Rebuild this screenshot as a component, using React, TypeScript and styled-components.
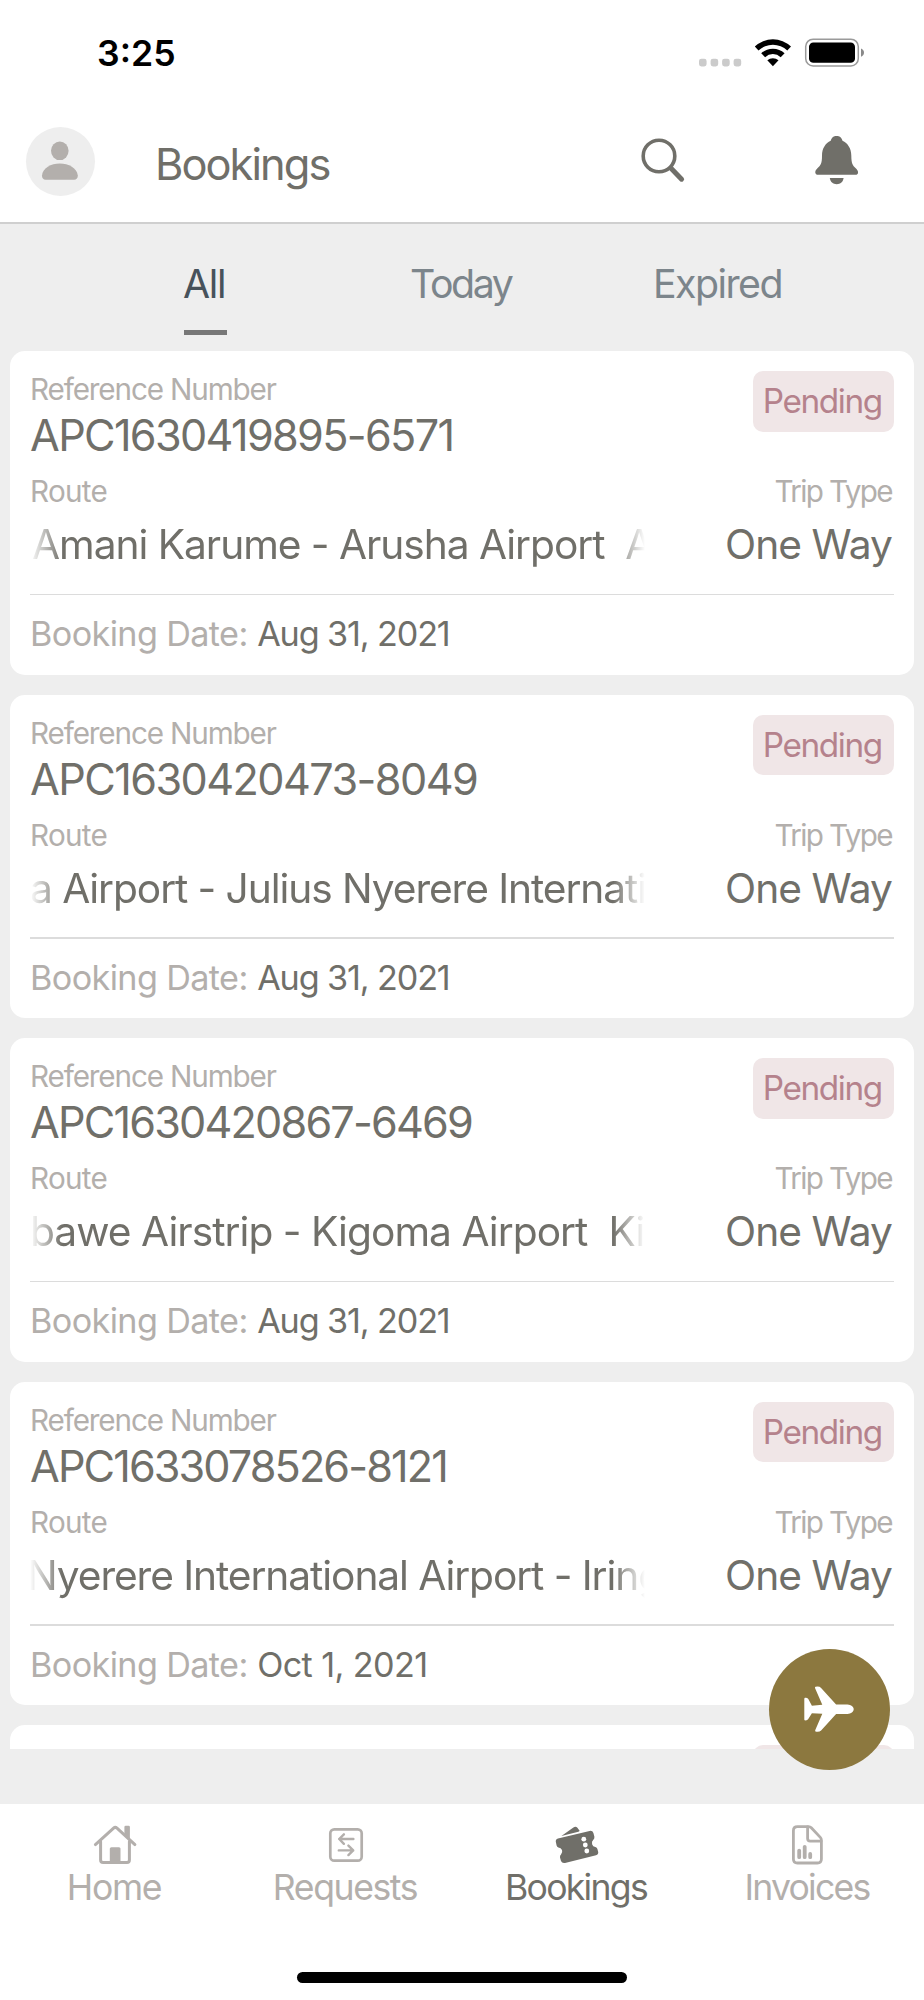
import React from 'react';
import styled, { createGlobalStyle } from 'styled-components';

const color = {
  ink: '#706f69',
  muted: '#b3afac',
  surface: '#eeeeee',
  white: '#ffffff',
  line: '#dcdcdc',
  gold: '#8c783f',
  badge: '#f0e6e7',
  badgeText: '#b5828c',
};

const GlobalStyle = createGlobalStyle`
  * { box-sizing: border-box; }
  body {
    margin: 0;
    background: ${color.white};
    font-family: Inter, "Liberation Sans", sans-serif;
    color: ${color.ink};
  }
`;

const Screen = styled.div`
  position: relative;
  display: flex;
  flex-direction: column;
  width: 924px;
  height: 2000px;
  overflow: hidden;
  background: ${color.white};
`;

const StatusBar = styled.div`
  display: flex;
  justify-content: space-between;
  align-items: center;
  height: 106px;
  padding: 0 59px 0 97px;
`;

const Clock = styled.span`
  padding-top: 2px;
  font-size: 35.6px;
  font-weight: 600;
  line-height: 44px;
  color: #000;
`;

const Header = styled.header`
  display: flex;
  align-items: center;
  height: 118px;
  padding: 0 62px 0 26px;
  border-bottom: 2px solid #cfcfcf;
`;

const Avatar = styled.div`
  width: 69px;
  height: 69px;
  margin-bottom: 5px;
  border-radius: 50%;
  background: ${color.surface};
`;

const Title = styled.h1`
  flex: 1;
  margin: 0 0 0 60px;
  font-size: 43.4px;
  font-weight: 400;
  line-height: 52px;
  letter-spacing: -1.94px;
`;

const HeaderActions = styled.div`
  display: flex;
  gap: 124px;
  margin-bottom: 6px;
`;

const Tabs = styled.div`
  display: grid;
  grid-template-columns: repeat(3, 1fr);
  height: 127px;
  padding: 29.5px 77px 0;
  background: ${color.surface};
`;

const Tab = styled.div<{ $active?: boolean; $track: number }>`
  display: flex;
  flex-direction: column;
  align-items: center;
  gap: 16.5px;
  font-size: 39.3px;
  line-height: 60px;
  letter-spacing: ${p => p.$track}px;
  color: ${p => (p.$active ? '#47525b' : '#7c858b')};

  &::after {
    content: '';
    width: 43px;
    height: 4.6px;
    background: ${p => (p.$active ? '#777777' : 'transparent')};
  }
`;

const TabText = styled.span`
  padding-right: 2.5px;
`;

const ListArea = styled.main`
  height: 1453px;
  background: ${color.surface};
`;

const List = styled.div`
  display: flex;
  flex-direction: column;
  gap: 20px;
  height: 1397.6px;
  padding: 0 10px;
  overflow: hidden;
`;

const Card = styled.article`
  flex: none;
  height: 323.6px;
  padding: 20px;
  overflow: hidden;
  border-radius: 15px;
  background: ${color.white};
`;

const CardRow = styled.div`
  display: flex;
  justify-content: space-between;
`;

const Cell = styled.div<{ $end?: boolean }>`
  display: flex;
  flex-direction: column;
  align-items: ${p => (p.$end ? 'flex-end' : 'flex-start')};
  padding-right: ${p => (p.$end ? '2px' : '0')};
`;

const Label = styled.span<{ $track: number }>`
  font-size: 29.7px;
  line-height: 36px;
  letter-spacing: ${p => p.$track}px;
  color: ${color.muted};
`;

const Reference = styled.span<{ $track: number }>`
  margin-bottom: 9.5px;
  font-size: 43.2px;
  line-height: 56.8px;
  letter-spacing: ${p => p.$track}px;
`;

const Badge = styled.span`
  display: flex;
  justify-content: center;
  width: 141px;
  height: 60.7px;
  padding-right: 2.5px;
  border-radius: 10px;
  background: ${color.badge};
  font-size: 33.3px;
  line-height: 61px;
  letter-spacing: -1.37px;
  color: ${color.badgeText};
`;

const Marquee = styled.div<{ $shift: number; $track: number }>`
  width: 615px;
  overflow: hidden;
  font-size: 40.7px;
  line-height: 71px;
  letter-spacing: ${p => p.$track}px;
  text-indent: ${p => p.$shift}px;
  white-space: pre;
  mask-image: linear-gradient(to right, transparent, #000 32px, #000 calc(100% - 32px), transparent);
`;

const TripType = styled.span`
  font-size: 40.7px;
  line-height: 71px;
  letter-spacing: -0.92px;
`;

const Divider = styled.hr`
  height: 1.5px;
  margin: 13.3px 0 0;
  border: 0;
  background: ${color.line};
`;

const DateRow = styled.div`
  display: flex;
  gap: 9.5px;
  font-size: 34.2px;
  line-height: 77.4px;
`;

const DateLabel = styled.span`
  letter-spacing: -0.62px;
  color: ${color.muted};
`;

const DateValue = styled.span<{ $track: number }>`
  letter-spacing: ${p => p.$track}px;
`;

const Fab = styled.button`
  position: absolute;
  right: 34.5px;
  bottom: 230.5px;
  width: 121px;
  height: 121px;
  padding: 0;
  border: 0;
  border-radius: 50%;
  background: ${color.gold};
`;

const BottomNav = styled.nav`
  display: grid;
  grid-template-columns: repeat(4, 1fr);
  height: 167.5px;
  padding-top: 16px;
`;

const NavItem = styled.div<{ $active?: boolean; $track: number }>`
  display: flex;
  flex-direction: column;
  align-items: center;
  gap: 1px;
  padding-right: 1px;
  font-size: 35.6px;
  line-height: 44px;
  letter-spacing: ${p => p.$track}px;
  color: ${p => (p.$active ? color.ink : color.muted)};
`;

const NavText = styled.span`
  padding-right: 2px;
`;

const HomeIndicator = styled.div`
  width: 330px;
  height: 11.5px;
  margin: 0 auto;
  border-radius: 6px;
  background: #000;
`;

const StatusIcons = () => (
  <svg width="170" height="32" viewBox="696 36.6 170 32">
    {[700, 711.6, 723.1, 734.6].map(x => (
      <rect key={x} x={x} y="58.3" width="7.6" height="7.8" rx="2.4" fill="#cbcbcb" />
    ))}
    <path d="M755.8 46.2 A26 26 0 0 1 792 46.2 L788.3 50.2 A20.6 20.6 0 0 0 759.5 50.2Z" />
    <path d="M762.2 52.9 A17 17 0 0 1 785.6 52.9 L781.7 56.8 A11.4 11.4 0 0 0 766.1 56.8Z" />
    <path d="M768.3 59.9 A8.6 8.6 0 0 1 779.5 59.9 L773.9 65.8Z" />
    <rect x="806.7" y="38.8" width="52.6" height="26.8" rx="7.4" fill="none" stroke="#9a9a9a" strokeWidth="1.5" />
    <rect x="810" y="42" width="46" height="20.4" rx="4.4" />
    <path d="M862 48 Q865 49.3 865 52.2 Q865 55.2 862 56.4Z" fill="#8a8a8a" />
  </svg>
);

const PersonIcon = () => (
  <svg width="69" height="69" viewBox="26 127.5 69 69" fill={color.muted}>
    <ellipse cx="59.8" cy="151.3" rx="8.8" ry="9.3" />
    <path d="M42 176 C42.6 168.5 51 164 59.8 164 C68.6 164 77 168.5 77.8 176 C77.9 178.6 76.5 180.2 74 180.2 H45.8 C43.2 180.2 41.9 178.6 42 176Z" />
  </svg>
);

const SearchIcon = () => (
  <svg width="50" height="50" viewBox="638 136 50 50" fill="none" stroke={color.ink}>
    <circle cx="659" cy="156" r="15.8" strokeWidth="3.6" />
    <path d="M671 168.3 L681.6 179.2" strokeWidth="5" strokeLinecap="round" />
  </svg>
);

const BellIcon = () => (
  <svg width="50" height="50" viewBox="812 136 50 50" fill={color.ink}>
    <path d="M836.6 135.9 C833.5 135.9 831.5 137.8 830.7 140.8 C825.5 143.2 822 148.5 822 155.5 C822 163.5 820.9 165.3 817.2 168.5 C815.7 169.9 815 171.6 815.4 173 C815.7 174.2 816.5 174.8 817.8 174.8 H855.6 C856.9 174.8 857.8 174.2 858 173 C858.3 171.6 857.6 169.9 856 168.5 C852.4 165.3 851.4 163.5 851.3 155.5 C851.3 148.5 847.7 143.2 842.5 140.8 C841.7 137.8 839.7 135.9 836.6 135.9Z" />
    <path d="M829.8 178 H843.6 C843.2 181.8 840.4 184.2 836.7 184.2 C833 184.2 830.2 181.8 829.8 178Z" />
  </svg>
);

const PlaneIcon = () => (
  <svg width="121" height="121" viewBox="768.5 1648.5 121 121" fill={color.white}>
    <path d="M815 1686.2 Q818.8 1685.4 820.6 1687.4 L835.6 1704 H847 C850.6 1704.2 853.2 1706.4 853.2 1708.7 C853.2 1711 850.6 1713.2 847 1713.4 H835.6 L820.6 1730 Q818.8 1731.8 815 1731.1 Q814.4 1730.6 814.8 1729.6 L821.8 1713.3 L811.4 1712.8 L807.6 1718.8 Q806.4 1720.4 804.2 1719.8 Q803.8 1719.6 803.8 1718.8 V1698.4 Q803.8 1697.4 804.4 1697.2 Q806.6 1696.8 807.8 1698.6 L811.4 1705.2 L821.8 1704.2 L814.6 1687.8 Q814.2 1686.6 815 1686.2Z" />
  </svg>
);

const HomeIcon = () => (
  <svg width="50" height="45" viewBox="90 1820 50 45" fill="none" stroke={color.muted} strokeWidth="3" strokeLinecap="round" strokeLinejoin="round">
    <path d="M95.4 1844.6 L113.6 1828.1 Q115.3 1826.6 117 1828.1 L134.9 1844.6" />
    <path d="M100.6 1841.5 V1860 Q100.6 1862.5 103.1 1862.5 H127 Q129.4 1862.5 129.4 1860 V1841.5" />
    <path d="M124.4 1827 Q124.4 1825.7 125.7 1825.7 H128.6 Q129.9 1825.7 129.9 1827 V1839.6 L124.4 1834.6Z" fill={color.muted} stroke="none" />
    <path d="M109.8 1862.5 V1848.8 Q109.8 1847.2 111.4 1847.2 H119 Q120.5 1847.2 120.5 1848.8 V1862.5Z" fill={color.muted} stroke="none" />
  </svg>
);

const RequestsIcon = () => (
  <svg width="50" height="45" viewBox="321 1820 50 45" fill="none" stroke={color.muted} strokeWidth="2.7" strokeLinecap="round" strokeLinejoin="round">
    <rect x="330.3" y="1829.3" width="31.4" height="31.4" rx="4" />
    <path d="M353.4 1839 H339.2 M343.9 1834.3 L339.2 1839 L343.9 1843.8" strokeWidth="2.4" />
    <path d="M338.8 1850.4 H353.2 M348.4 1845.6 L353.2 1850.4 L348.4 1855.1" strokeWidth="2.4" />
  </svg>
);

const TicketIcon = () => (
  <svg width="50" height="45" viewBox="552 1820 50 45" fill={color.ink}>
    <path d="M561.4 1836 L573.4 1827.6 Q575.6 1826 577.4 1827.8 L579.6 1830.8 Q579.5 1831.4 578.4 1831.7Z" />
    <path d="M558 1838.4 L589.6 1830.9 Q592.6 1830.4 593.4 1833 L594.4 1836.8 Q594.7 1838.6 593.2 1840 Q591.4 1841.6 592.1 1844.2 Q592.8 1846.6 595.4 1847 Q597 1847.3 597.4 1849 L598.2 1852 Q598.6 1854.4 596 1855.2 L565 1863 Q562 1863.6 561 1861 L560 1857.4 Q559.7 1855.8 561 1854.6 Q562.9 1852.6 562 1850 Q561 1847.6 558.4 1847.4 Q557 1847 556.6 1845.4 L555.8 1841.8 Q555.4 1839.2 558 1838.4Z" />
    <g fill={color.white}>
      <circle cx="583.8" cy="1839.2" r="2.4" />
      <circle cx="585.3" cy="1845" r="2.4" />
      <circle cx="586.8" cy="1851" r="2.4" />
    </g>
  </svg>
);

const InvoiceIcon = () => (
  <svg width="50" height="45" viewBox="783 1820 50 45" fill="none" stroke={color.muted} strokeWidth="2.8" strokeLinecap="round" strokeLinejoin="round">
    <path d="M797.5 1826.7 H808.6 Q810.2 1826.7 811.3 1827.8 L820.3 1837.4 Q821.4 1838.6 821.4 1840.2 V1859 Q821.4 1863 817.4 1863 H797.4 Q793.4 1863 793.4 1859 V1830.7 Q793.4 1826.7 797.5 1826.7Z" />
    <path d="M807.6 1827 V1838.6 Q807.6 1841.2 810.2 1841.2 H821" />
    <path d="M799.2 1850.6 V1857.2 M804.7 1846.8 V1857.2 M810.2 1854 V1857.2" strokeWidth="3.8" />
  </svg>
);

type Booking = {
  reference: string;
  referenceTrack: number;
  route: string;
  shift: number;
  routeTrack: number;
  date: string;
  dateTrack: number;
};

const bookings: Booking[] = [
  { reference: 'APC1630419895-6571', referenceTrack: -1.66, route: 'Amani Karume - Arusha Airport  A', shift: 2, routeTrack: -1.03, date: 'Aug 31, 2021', dateTrack: -1.13 },
  { reference: 'APC1630420473-8049', referenceTrack: -1.57, route: 'a Airport - Julius Nyerere Internati', shift: 0, routeTrack: -1.08, date: 'Aug 31, 2021', dateTrack: -1.13 },
  { reference: 'APC1630420867-6469', referenceTrack: -1.82, route: 'bawe Airstrip - Kigoma Airport  Ki', shift: 0, routeTrack: -0.96, date: 'Aug 31, 2021', dateTrack: -1.13 },
  { reference: 'APC1633078526-8121', referenceTrack: -1.9, route: 'Nyerere International Airport - Iring', shift: -3, routeTrack: -1.08, date: 'Oct 1, 2021', dateTrack: -0.6 },
];

const BookingCard = ({ booking }: { booking: Booking }) => (
  <Card>
    <CardRow>
      <Cell>
        <Label $track={-1.15}>Reference Number</Label>
        <Reference $track={booking.referenceTrack}>{booking.reference}</Reference>
      </Cell>
      <Badge>Pending</Badge>
    </CardRow>
    <CardRow>
      <Cell>
        <Label $track={-0.75}>Route</Label>
        <Marquee $shift={booking.shift} $track={booking.routeTrack}>{booking.route}</Marquee>
      </Cell>
      <Cell $end>
        <Label $track={-1.64}>Trip Type</Label>
        <TripType>One Way</TripType>
      </Cell>
    </CardRow>
    <Divider />
    <DateRow>
      <DateLabel>Booking Date:</DateLabel>
      <DateValue $track={booking.dateTrack}>{booking.date}</DateValue>
    </DateRow>
  </Card>
);

export default function App() {
  return (
    <>
      <GlobalStyle />
      <Screen>
        <StatusBar>
          <Clock>3:25</Clock>
          <StatusIcons />
        </StatusBar>
        <Header>
          <Avatar><PersonIcon /></Avatar>
          <Title>Bookings</Title>
          <HeaderActions>
            <SearchIcon />
            <BellIcon />
          </HeaderActions>
        </Header>
        <Tabs>
          <Tab $active $track={-1.31}><TabText>All</TabText></Tab>
          <Tab $track={-2.4}><TabText>Today</TabText></Tab>
          <Tab $track={-1.53}><TabText>Expired</TabText></Tab>
        </Tabs>
        <ListArea>
          <List>
            {bookings.map(b => <BookingCard key={b.reference} booking={b} />)}
            <Card>
              <CardRow>
                <Cell />
                <Badge />
              </CardRow>
            </Card>
          </List>
        </ListArea>
        <BottomNav>
          <NavItem $track={-1.34}><HomeIcon /><NavText>Home</NavText></NavItem>
          <NavItem $track={-1.41}><RequestsIcon /><NavText>Requests</NavText></NavItem>
          <NavItem $active $track={-1.72}><TicketIcon /><NavText>Bookings</NavText></NavItem>
          <NavItem $track={-1.78}><InvoiceIcon /><NavText>Invoices</NavText></NavItem>
        </BottomNav>
        <HomeIndicator />
        <Fab aria-label="New booking"><PlaneIcon /></Fab>
      </Screen>
    </>
  );
}
